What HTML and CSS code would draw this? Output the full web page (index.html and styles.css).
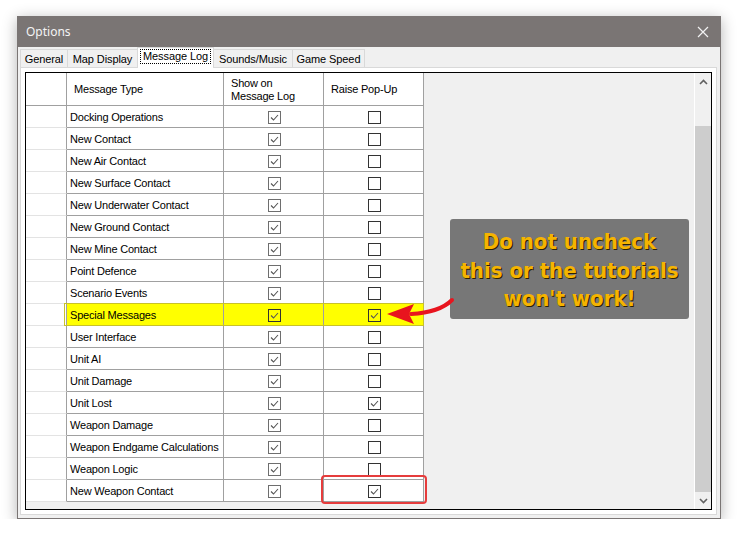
FILE: index.html
```html
<!DOCTYPE html>
<html lang="en">
<head>
<meta charset="UTF-8">
<meta name="viewport" content="width=device-width, initial-scale=1.0">
<title>Options</title>
<link rel="stylesheet" href="styles.css">
</head>
<body>
<div class="window">
<div class="titlebar">
<span class="title">Options</span>
<svg class="close" width="12" height="12" viewBox="0 0 12 12"><path d="M1 1 L11 11 M11 1 L1 11" stroke="#f2f2f2" stroke-width="1.2" fill="none"/></svg>
</div>
<div class="content">
<div class="tabs">
<div class="tab" style="width:48px">General</div>
<div class="tab" style="width:71px">Map Display</div>
<div class="tab active" style="width:77px"><span class="focus">Message Log</span></div>
<div class="tab" style="width:80px">Sounds/Music</div>
<div class="tab" style="width:73px">Game Speed</div>
</div>
<div class="page">
<div class="grid">
<div class="cells">
<div class="row head">
<div class="c rh"></div>
<div class="c">Message Type</div>
<div class="c">Show on<br>Message Log</div>
<div class="c">Raise Pop-Up</div>
</div>
<div class="row"><div class="c rh"></div><div class="c">Docking Operations</div><div class="c mid"><span class="cb lt"><svg viewBox="0 0 11 11"><path d="M2 5.5 L4.5 8 L9 3"/></svg></span></div><div class="c mid"><span class="cb"></span></div></div>
<div class="row"><div class="c rh"></div><div class="c">New Contact</div><div class="c mid"><span class="cb lt"><svg viewBox="0 0 11 11"><path d="M2 5.5 L4.5 8 L9 3"/></svg></span></div><div class="c mid"><span class="cb"></span></div></div>
<div class="row"><div class="c rh"></div><div class="c">New Air Contact</div><div class="c mid"><span class="cb lt"><svg viewBox="0 0 11 11"><path d="M2 5.5 L4.5 8 L9 3"/></svg></span></div><div class="c mid"><span class="cb"></span></div></div>
<div class="row"><div class="c rh"></div><div class="c">New Surface Contact</div><div class="c mid"><span class="cb lt"><svg viewBox="0 0 11 11"><path d="M2 5.5 L4.5 8 L9 3"/></svg></span></div><div class="c mid"><span class="cb"></span></div></div>
<div class="row"><div class="c rh"></div><div class="c">New Underwater Contact</div><div class="c mid"><span class="cb lt"><svg viewBox="0 0 11 11"><path d="M2 5.5 L4.5 8 L9 3"/></svg></span></div><div class="c mid"><span class="cb"></span></div></div>
<div class="row"><div class="c rh"></div><div class="c">New Ground Contact</div><div class="c mid"><span class="cb lt"><svg viewBox="0 0 11 11"><path d="M2 5.5 L4.5 8 L9 3"/></svg></span></div><div class="c mid"><span class="cb"></span></div></div>
<div class="row"><div class="c rh"></div><div class="c">New Mine Contact</div><div class="c mid"><span class="cb lt"><svg viewBox="0 0 11 11"><path d="M2 5.5 L4.5 8 L9 3"/></svg></span></div><div class="c mid"><span class="cb"></span></div></div>
<div class="row"><div class="c rh"></div><div class="c">Point Defence</div><div class="c mid"><span class="cb lt"><svg viewBox="0 0 11 11"><path d="M2 5.5 L4.5 8 L9 3"/></svg></span></div><div class="c mid"><span class="cb"></span></div></div>
<div class="row"><div class="c rh"></div><div class="c">Scenario Events</div><div class="c mid"><span class="cb lt"><svg viewBox="0 0 11 11"><path d="M2 5.5 L4.5 8 L9 3"/></svg></span></div><div class="c mid"><span class="cb"></span></div></div>
<div class="row hl"><div class="c rh"></div><div class="c">Special Messages</div><div class="c mid"><span class="cb"><svg viewBox="0 0 11 11"><path d="M2 5.5 L4.5 8 L9 3"/></svg></span></div><div class="c mid"><span class="cb"><svg viewBox="0 0 11 11"><path d="M2 5.5 L4.5 8 L9 3"/></svg></span></div></div>
<div class="row"><div class="c rh"></div><div class="c">User Interface</div><div class="c mid"><span class="cb lt"><svg viewBox="0 0 11 11"><path d="M2 5.5 L4.5 8 L9 3"/></svg></span></div><div class="c mid"><span class="cb"></span></div></div>
<div class="row"><div class="c rh"></div><div class="c">Unit AI</div><div class="c mid"><span class="cb lt"><svg viewBox="0 0 11 11"><path d="M2 5.5 L4.5 8 L9 3"/></svg></span></div><div class="c mid"><span class="cb"></span></div></div>
<div class="row"><div class="c rh"></div><div class="c">Unit Damage</div><div class="c mid"><span class="cb lt"><svg viewBox="0 0 11 11"><path d="M2 5.5 L4.5 8 L9 3"/></svg></span></div><div class="c mid"><span class="cb"></span></div></div>
<div class="row"><div class="c rh"></div><div class="c">Unit Lost</div><div class="c mid"><span class="cb lt"><svg viewBox="0 0 11 11"><path d="M2 5.5 L4.5 8 L9 3"/></svg></span></div><div class="c mid"><span class="cb"><svg viewBox="0 0 11 11"><path d="M2 5.5 L4.5 8 L9 3"/></svg></span></div></div>
<div class="row"><div class="c rh"></div><div class="c">Weapon Damage</div><div class="c mid"><span class="cb lt"><svg viewBox="0 0 11 11"><path d="M2 5.5 L4.5 8 L9 3"/></svg></span></div><div class="c mid"><span class="cb"></span></div></div>
<div class="row"><div class="c rh"></div><div class="c">Weapon Endgame Calculations</div><div class="c mid"><span class="cb lt"><svg viewBox="0 0 11 11"><path d="M2 5.5 L4.5 8 L9 3"/></svg></span></div><div class="c mid"><span class="cb"></span></div></div>
<div class="row"><div class="c rh"></div><div class="c">Weapon Logic</div><div class="c mid"><span class="cb lt"><svg viewBox="0 0 11 11"><path d="M2 5.5 L4.5 8 L9 3"/></svg></span></div><div class="c mid"><span class="cb"></span></div></div>
<div class="row"><div class="c rh"></div><div class="c">New Weapon Contact</div><div class="c mid"><span class="cb lt"><svg viewBox="0 0 11 11"><path d="M2 5.5 L4.5 8 L9 3"/></svg></span></div><div class="c mid"><span class="cb"><svg viewBox="0 0 11 11"><path d="M2 5.5 L4.5 8 L9 3"/></svg></span></div></div>
</div>
<div class="vscroll">
<div class="sbtn"><svg width="9" height="6" viewBox="0 0 9 6"><path d="M1 5 L4.5 1.5 L8 5" stroke="#606060" stroke-width="1.6" fill="none"/></svg></div>
<div class="track"><div class="thumb"></div></div>
<div class="sbtn"><svg width="9" height="6" viewBox="0 0 9 6"><path d="M1 1 L4.5 4.5 L8 1" stroke="#606060" stroke-width="1.6" fill="none"/></svg></div>
</div>
</div>
</div>
</div>

<!-- annotations drawn over the screenshot -->
<div class="callout">Do not uncheck<br>this or the tutorials<br>won't work!</div>
<svg class="arrow" width="80" height="40" viewBox="0 0 80 40">
<path d="M31 25 C50 24 64 19 72 11" stroke="#e8141e" stroke-width="4" fill="none" stroke-linecap="round"/>
<path d="M7 25 L34 15 L29 25 L34 35 Z" fill="#e8141e"/>
</svg>
<div class="redbox"></div>
</div>
</body>
</html>
```

FILE: styles.css
```css
* {
    box-sizing: border-box;
}
body {
    margin: 0;
    background: #fff;
    font-family: 'Liberation Sans', Arial, sans-serif;
    font-size: 11px;
    color: #000;
}
.window {
    position: relative;
    margin: 16px 0 0 17px;
    width: 704px;
    height: 503px;
    border: 1px solid #7a7574;
    border-top: none;
    background: #f0f0f0;
    box-shadow: 0 3px 14px rgba(0,0,0,0.3);
}
.titlebar {
    height: 31px;
    background: #7a7574;
    display: flex;
    align-items: center;
    justify-content: space-between;
    padding: 0 11px 0 8px;
}
.title {
    font-family: 'Noto Sans', 'Open Sans', sans-serif;
    font-size: 12px;
    color: #f4f4f4;
}
.content {
    padding: 0 2px;
}
.tabs {
    display: flex;
    align-items: flex-end;
    height: 20px;
    letter-spacing: -0.1px;
}
.tab {
    height: 18px;
    border: 1px solid #d9d9d9;
    border-bottom: none;
    margin-right: -1px;
    background: #f0f0f0;
    display: flex;
    align-items: center;
    justify-content: center;
    white-space: nowrap;
}
.tab.active {
    height: 21px;
    margin-bottom: -1px;
    background: #fff;
    position: relative;
    z-index: 1;
    padding-bottom: 3px;
}
.focus {
    border: 1px dotted #000;
    padding: 0 2px;
    line-height: 13px;
}
.page {
    width: 697px;
    height: 448px;
    border: 1px solid #d9d9d9;
    background: #fff;
    padding: 4px;
}
.grid {
    height: 100%;
    border: 1px solid #000;
    display: flex;
    background: #f0f0f0;
}
.cells {
    flex: 1;
    letter-spacing: -0.2px;
}
.row {
    display: grid;
    grid-template-columns: 41px 157px 100px 100px;
    height: 22px;
    width: 398px;
}
.c {
    background: #fff;
    border-right: 1px solid #a0a0a0;
    border-bottom: 1px solid #a0a0a0;
    padding: 1px 0 0 3px;
    line-height: 21px;
    white-space: nowrap;
    overflow: hidden;
}
.c.rh {
    border-bottom-color: #e3e3e3;
}
.c.mid {
    display: flex;
    align-items: center;
    justify-content: center;
    padding: 2px 0 0;
}
.row.head {
    height: 33px;
}
.row.head .c {
    display: flex;
    align-items: center;
    padding-left: 7px;
    line-height: 13px;
    border-bottom-color: #a0a0a0;
}
.cb {
    width: 13px;
    height: 13px;
    border: 1px solid #333;
    background: #fff;
    display: block;
    margin-left: 1px;
}
.cb.lt {
    border-color: #6e6e6e;
}
.cb svg {
    display: block;
    width: 11px;
    height: 11px;
}
.cb svg path {
    stroke: #555;
    stroke-width: 1.1;
    fill: none;
}
.row.hl {
    position: relative;
}
.row.hl .c:not(.rh),
.row.hl .cb {
    background: #ffff00;
}
.row.hl::after {
    content: '';
    position: absolute;
    left: 38px;
    right: 0;
    top: -1px;
    bottom: 0;
    border: 1px solid #c8c22a;
    pointer-events: none;
}
.vscroll {
    width: 17px;
    border-left: 1px solid #fff;
    display: flex;
    flex-direction: column;
    background: #f0f0f0;
}
.sbtn {
    height: 17px;
    display: flex;
    align-items: center;
    justify-content: center;
}
.track {
    flex: 1;
    padding-top: 36px;
    display: flex;
}
.thumb {
    flex: 1;
    background: #cdcdcd;
}
.callout {
    position: absolute;
    left: 432px;
    top: 203px;
    width: 239px;
    height: 100px;
    background: #777;
    border-radius: 3px;
    padding-top: 9px;
    text-align: center;
    font-family: 'DejaVu Sans Condensed', 'DejaVu Sans', sans-serif;
    font-stretch: condensed;
    font-weight: bold;
    font-size: 22px;
    line-height: 28.5px;
    color: #f5b400;
    text-shadow: 1px 1px 0 #2b2200;
}
.arrow {
    position: absolute;
    left: 362px;
    top: 273px;
}
.redbox {
    position: absolute;
    left: 303px;
    top: 459px;
    width: 106px;
    height: 29px;
    border: 2.5px solid #e63c3c;
    border-radius: 4px;
}
```
